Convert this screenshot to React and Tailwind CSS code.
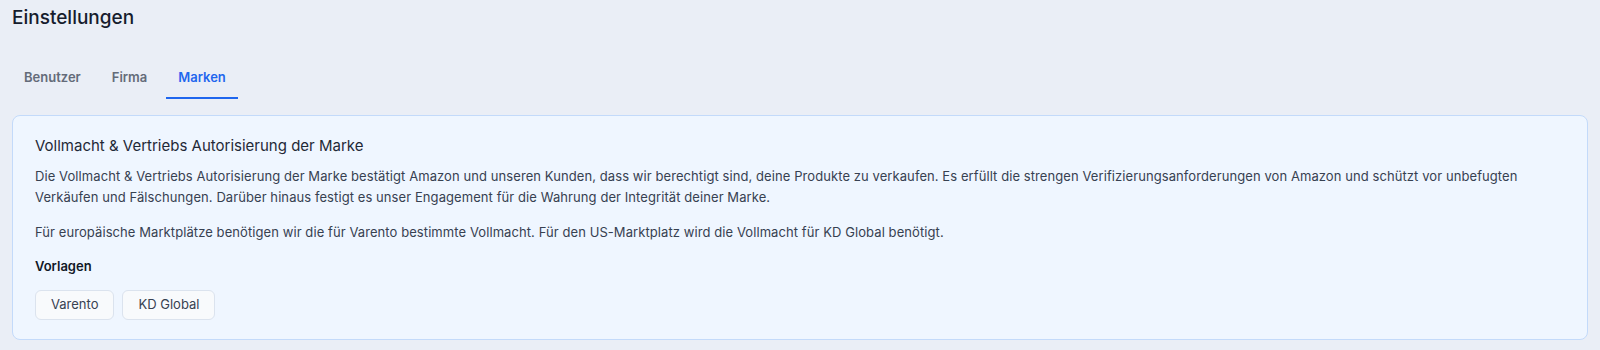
import { useState } from "react";

export default function App() {
  const [tab, setTab] = useState("Marken");
  const tabs = ["Benutzer", "Firma", "Marken"];

  return (
    <div
      className="min-h-screen bg-[#eaeef6] px-3 text-[#1f2937]"
      style={{ fontFamily: "Inter, 'Noto Sans', sans-serif" }}
    >
      {/* Header */}
      <h1 className="pt-[4px] text-[19px] leading-7 font-medium text-[#161c2d]">Einstellungen</h1>

      {/* Tabs */}
      <div className="mt-[27px] flex gap-[7px]">
        {tabs.map((t) => (
          <button
            key={t}
            onClick={() => setTab(t)}
            className={
              t === tab
                ? "border-b-2 border-[#1f66ee] px-3 pt-[8px] pb-[10px] text-[13px] leading-5 font-semibold text-[#1f66ee]"
                : "border-b-2 border-transparent px-3 pt-[8px] pb-[10px] text-[13px] leading-5 font-semibold text-[#646b79]"
            }
          >
            {t}
          </button>
        ))}
      </div>

      {/* Card */}
      <div className="mt-[16px] rounded-lg border border-[#c3dafa] bg-[#eff6ff] px-[22px] pt-[18px] pb-[19px]">
        <h2 className="text-[15px] leading-6 text-[#1f2937]">
          Vollmacht &amp; Vertriebs Autorisierung der Marke
        </h2>
        <p className="mt-[8px] text-[13px] leading-[21px] tracking-[0.08px] text-[#374151]">
          Die Vollmacht &amp; Vertriebs Autorisierung der Marke bestätigt Amazon und unseren Kunden, dass wir berechtigt sind, deine Produkte zu verkaufen. Es erfüllt die strengen Verifizierungsanforderungen von Amazon und schützt vor unbefugten Verkäufen und Fälschungen. Darüber hinaus festigt es unser Engagement für die Wahrung der Integrität deiner Marke.
        </p>
        <p className="mt-[14px] text-[13px] leading-[21px] tracking-[0.08px] text-[#374151]">
          Für europäische Marktplätze benötigen wir die für Varento bestimmte Vollmacht. Für den US-Marktplatz wird die Vollmacht für KD Global benötigt.
        </p>
        <h3 className="mt-[13px] text-[13px] leading-[21px] font-semibold text-[#111827]">Vorlagen</h3>
        <div className="mt-[13px] flex gap-2">
          <button className="h-[30px] rounded-md border border-[#dbe3ee] bg-[#f8fafc] px-[15px] text-[13px] text-[#374151]">
            Varento
          </button>
          <button className="h-[30px] rounded-md border border-[#dbe3ee] bg-[#f8fafc] px-[15px] text-[13px] text-[#374151]">
            KD Global
          </button>
        </div>
      </div>
    </div>
  );
}
